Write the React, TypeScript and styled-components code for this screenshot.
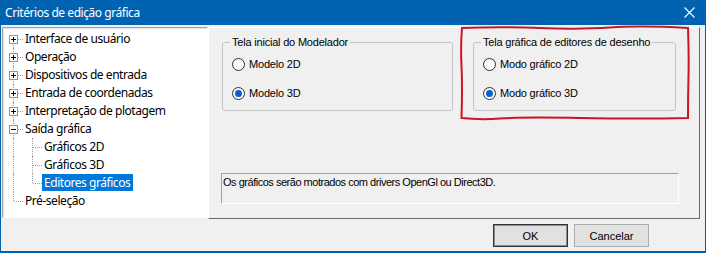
import styled, { createGlobalStyle } from "styled-components";

const GlobalStyle = createGlobalStyle`
  html, body {
    margin: 0;
    padding: 0;
    background: #f0f0f0;
  }
  * {
    box-sizing: border-box;
  }
`;

const uiFont = `"Noto Sans", "Open Sans", sans-serif`;
const classicFont = `"Liberation Sans", Arial, sans-serif`;

const Window = styled.div`
  width: 706px;
  height: 253px;
  display: flex;
  flex-direction: column;
  background: #f0f0f0;
  border: 1px solid #0063b1;
  border-top: 0;
  border-bottom-width: 2px;
`;

const TitleBar = styled.div`
  flex: none;
  height: 25px;
  display: flex;
  align-items: center;
  justify-content: space-between;
  padding: 0 10px 0 4px;
  background: #0063b1;
  color: #fff;
  font: 12px ${uiFont};
  letter-spacing: -0.45px;
`;

const Body = styled.div`
  display: flex;
  padding: 2px 5px 0 1px;
`;

const Tree = styled.ul`
  flex: none;
  width: 206px;
  height: 191px;
  margin: 0;
  padding: 2px 0 0 1px;
  list-style: none;
  background: #fff;
  border: 1px solid;
  border-color: #a0a0a0 #fff #fff #a0a0a0;
  box-shadow: inset 1px 1px 0 #e3e3e3;
  font: 12px ${uiFont};
  letter-spacing: -0.45px;
  color: #000;
`;

const Row = styled.li`
  display: flex;
  height: 18px;
`;

type Line = "full" | "top" | "bottom" | "none";

const Cell = styled.span<{ $line: Line; $branch?: boolean }>`
  position: relative;
  flex: none;
  width: 19px;

  &::before {
    content: "";
    position: absolute;
    left: 9px;
    top: ${p => (p.$line === "bottom" ? "9px" : "0")};
    bottom: ${p => (p.$line === "top" ? "9px" : "0")};
    display: ${p => (p.$line === "none" ? "none" : "block")};
    border-left: 1px dotted #a0a0a0;
  }

  &::after {
    content: "";
    position: absolute;
    left: 10px;
    right: 0;
    top: 9px;
    display: ${p => (p.$branch ? "block" : "none")};
    border-top: 1px dotted #a0a0a0;
  }
`;

const Expander = styled.span<{ $open?: boolean }>`
  position: absolute;
  z-index: 1;
  left: 5px;
  top: 5px;
  width: 9px;
  height: 9px;
  background: #fff;
  border: 1px solid #919191;

  &::before {
    content: "";
    position: absolute;
    left: 1px;
    top: 3px;
    width: 5px;
    height: 1px;
    background: #000;
  }

  &::after {
    content: "";
    position: absolute;
    left: 3px;
    top: 1px;
    width: 1px;
    height: 5px;
    background: #000;
    display: ${p => (p.$open ? "none" : "block")};
  }
`;

const Label = styled.span<{ $selected?: boolean }>`
  padding: 0 3px 0 2px;
  line-height: 18px;
  white-space: nowrap;
  background: ${p => (p.$selected ? "#0078d7" : "transparent")};
  color: ${p => (p.$selected ? "#fff" : "#000")};
`;

const Panel = styled.div`
  flex: 1;
  height: 192px;
  display: flex;
  flex-direction: column;
  padding: 8px 0 0 13px;
  border: 1px solid;
  border-color: #fff #696969 #696969 #fff;
  font: 11px ${classicFont};
  letter-spacing: -0.2px;
  color: #000;
`;

const GroupRow = styled.div`
  display: flex;
  gap: 20px;
`;

const Highlighted = styled.div`
  position: relative;
`;

const Group = styled.fieldset<{ $width: number }>`
  width: ${p => p.$width}px;
  height: 75px;
  margin: 0;
  padding: 7px 9px 0;
  border: 1px solid #c4c4c4;
  border-radius: 3px;
  display: flex;
  flex-direction: column;
  gap: 12px;
`;

const Legend = styled.legend`
  margin-left: -2px;
  padding: 0 2px;
  line-height: 13px;
`;

const Option = styled.label`
  display: flex;
  align-items: center;
  gap: 4px;
  height: 17px;
  line-height: 13px;
`;

const RadioDot = styled.span<{ $checked?: boolean }>`
  flex: none;
  width: 13px;
  height: 13px;
  display: flex;
  align-items: center;
  justify-content: center;
  border-radius: 50%;
  border: 1px solid #333;
  background: linear-gradient(135deg, #f4f4f4, #fff);

  &::after {
    content: "";
    width: 7px;
    height: 7px;
    border-radius: 50%;
    background: #0c5fd0;
    display: ${p => (p.$checked ? "block" : "none")};
  }
`;

const Annotation = styled.svg`
  position: absolute;
  left: -13px;
  top: -10px;
  pointer-events: none;
  overflow: visible;
`;

const Message = styled.div`
  width: 458px;
  height: 31px;
  margin-top: 62px;
  margin-left: -1px;
  padding: 2px 0 0 1px;
  line-height: 13px;
  letter-spacing: -0.48px;
  border: 1px solid;
  border-color: #a0a0a0 #fff #fff #a0a0a0;
`;

const Footer = styled.div`
  display: flex;
  justify-content: flex-end;
  gap: 6px;
  padding: 5px 56px 0 0;
`;

const Button = styled.button<{ $default?: boolean }>`
  width: 75px;
  height: 23px;
  padding: 0;
  font: 11px ${classicFont};
  color: #000;
  background: #e1e1e1;
  border: 1px solid ${p => (p.$default ? "#333" : "#adadad")};
  box-shadow: ${p => (p.$default ? "inset 0 0 0 1px #8c8c8c" : "none")};
`;

function Radio({ label, checked }: { label: string; checked?: boolean }) {
  return (
    <Option>
      <RadioDot $checked={checked} />
      {label}
    </Option>
  );
}

const treeItems: {
  label: string;
  cells: { line: Line; branch?: boolean; box?: "plus" | "minus" }[];
  selected?: boolean;
}[] = [
  { label: "Interface de usuário", cells: [{ line: "bottom", branch: true, box: "plus" }] },
  { label: "Operação", cells: [{ line: "full", branch: true, box: "plus" }] },
  { label: "Dispositivos de entrada", cells: [{ line: "full", branch: true, box: "plus" }] },
  { label: "Entrada de coordenadas", cells: [{ line: "full", branch: true, box: "plus" }] },
  { label: "Interpretação de plotagem", cells: [{ line: "full", branch: true, box: "plus" }] },
  { label: "Saída gráfica", cells: [{ line: "full", branch: true, box: "minus" }] },
  { label: "Gráficos 2D", cells: [{ line: "full" }, { line: "full", branch: true }] },
  { label: "Gráficos 3D", cells: [{ line: "full" }, { line: "full", branch: true }] },
  { label: "Editores gráficos", cells: [{ line: "full" }, { line: "top", branch: true }], selected: true },
  { label: "Pré-seleção", cells: [{ line: "top", branch: true }] }
];

export default function App() {
  return (
    <>
      <GlobalStyle />
      <Window>
        <TitleBar>
          <span>Critérios de edição gráfica</span>
          <svg width="11" height="11" viewBox="0 0 11 11">
            <path d="M0.5 0.5 L10.5 10.5 M10.5 0.5 L0.5 10.5" stroke="#fff" strokeWidth="1.1" />
          </svg>
        </TitleBar>
        <Body>
          <Tree>
            {treeItems.map(item => (
              <Row key={item.label}>
                {item.cells.map((c, i) => (
                  <Cell key={i} $line={c.line} $branch={c.branch}>
                    {c.box && <Expander $open={c.box === "minus"} />}
                  </Cell>
                ))}
                <span>
                  <Label $selected={item.selected}>{item.label}</Label>
                </span>
              </Row>
            ))}
          </Tree>
          <Panel>
            <GroupRow>
              <Group $width={231}>
                <Legend>Tela inicial do Modelador</Legend>
                <Radio label="Modelo 2D" />
                <Radio label="Modelo 3D" checked />
              </Group>
              <Highlighted>
                <Group $width={203}>
                  <Legend>Tela gráfica de editores de desenho</Legend>
                  <Radio label="Modo gráfico 2D" />
                  <Radio label="Modo gráfico 3D" checked />
                </Group>
                <Annotation width="230" height="94" viewBox="0 0 230 94">
                  <path
                    d="M2 2 Q40 0.5 80 2 T150 1.5 T228 2 Q229 30 228.5 50 T228 92 Q180 93 120 92 T40 92.5 T1.5 92 Q2.5 60 1.5 40 T2 2 Z"
                    fill="none"
                    stroke="#cc1424"
                    strokeWidth="2"
                  />
                </Annotation>
              </Highlighted>
            </GroupRow>
            <Message>Os gráficos serão motrados com drivers OpenGl ou Direct3D.</Message>
          </Panel>
        </Body>
        <Footer>
          <Button $default>OK</Button>
          <Button>Cancelar</Button>
        </Footer>
      </Window>
    </>
  );
}
